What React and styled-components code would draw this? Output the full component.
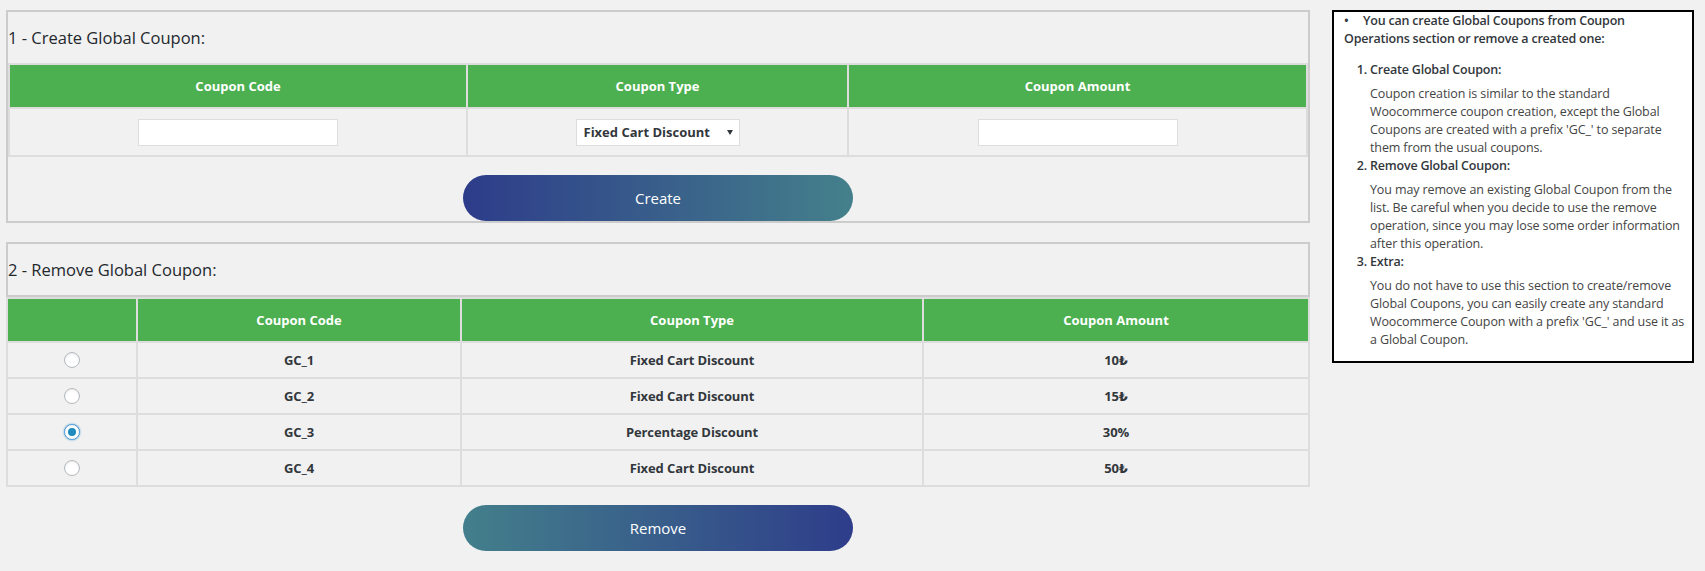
import React from 'react';
import styled, { createGlobalStyle } from 'styled-components';

const GlobalStyle = createGlobalStyle`
  html, body {
    margin: 0;
    padding: 0;
    background: #f1f1f1;
  }

  body {
    font-family: "Open Sans", "DejaVu Sans", sans-serif;
    color: #444;
  }

  * {
    box-sizing: border-box;
  }
`;

const coupons = [
    { code: 'GC_1', type: 'Fixed Cart Discount', amount: '10₺' },
    { code: 'GC_2', type: 'Fixed Cart Discount', amount: '15₺' },
    { code: 'GC_3', type: 'Percentage Discount', amount: '30%', checked: true },
    { code: 'GC_4', type: 'Fixed Cart Discount', amount: '50₺' },
];

const steps = [
    {
        title: 'Create Global Coupon:',
        text: "Coupon creation is similar to the standard Woocommerce coupon creation, except the Global Coupons are created with a prefix 'GC_' to separate them from the usual coupons.",
    },
    {
        title: 'Remove Global Coupon:',
        text: 'You may remove an existing Global Coupon from the list. Be careful when you decide to use the remove operation, since you may lose some order information after this operation.',
    },
    {
        title: 'Extra:',
        text: "You do not have to use this section to create/remove Global Coupons, you can easily create any standard Woocommerce Coupon with a prefix 'GC_' and use it as a Global Coupon.",
    },
];

export default function App() {
    return (
        <>
            <GlobalStyle />
            <Page>
                <Operations>
                    <CreateBox>
                        <SectionTitle>1 - Create Global Coupon:</SectionTitle>
                        <Table>
                            <colgroup>
                                <col style={{ width: 458 }} />
                                <col style={{ width: 381 }} />
                                <col style={{ width: 459 }} />
                            </colgroup>
                            <thead>
                                <tr>
                                    <Th>Coupon Code</Th>
                                    <Th>Coupon Type</Th>
                                    <Th>Coupon Amount</Th>
                                </tr>
                            </thead>
                            <tbody>
                                <tr>
                                    <FieldCell>
                                        <Field><TextInput type="text" /></Field>
                                    </FieldCell>
                                    <FieldCell>
                                        <Field>
                                            <SelectWrap>
                                                <Select defaultValue="fixed_cart">
                                                    <option value="fixed_cart">Fixed Cart Discount</option>
                                                    <option value="percent">Percentage Discount</option>
                                                </Select>
                                                <Arrow />
                                            </SelectWrap>
                                        </Field>
                                    </FieldCell>
                                    <FieldCell>
                                        <Field><TextInput type="text" /></Field>
                                    </FieldCell>
                                </tr>
                            </tbody>
                        </Table>
                        <ActionRow>
                            <GradientButton>Create</GradientButton>
                        </ActionRow>
                    </CreateBox>

                    <TitleBox>
                        <SectionTitle>2 - Remove Global Coupon:</SectionTitle>
                    </TitleBox>
                    <Table>
                        <colgroup>
                            <col style={{ width: 130 }} />
                            <col style={{ width: 324 }} />
                            <col style={{ width: 462 }} />
                            <col style={{ width: 386 }} />
                        </colgroup>
                        <thead>
                            <tr>
                                <Th></Th>
                                <Th>Coupon Code</Th>
                                <Th>Coupon Type</Th>
                                <Th>Coupon Amount</Th>
                            </tr>
                        </thead>
                        <tbody>
                            {coupons.map(c => (
                                <tr key={c.code}>
                                    <Td><Radio type="radio" name="gc" defaultChecked={c.checked} /></Td>
                                    <Td>{c.code}</Td>
                                    <Td>{c.type}</Td>
                                    <Td>{c.amount}</Td>
                                </tr>
                            ))}
                        </tbody>
                    </Table>
                    <ActionRow>
                        <GradientButton $reverse>Remove</GradientButton>
                    </ActionRow>
                </Operations>

                <InfoPanel>
                    <Intro>
                        You can create Global Coupons from Coupon Operations section or remove a created one:
                    </Intro>
                    <Steps>
                        {steps.map(s => (
                            <Step key={s.title}>
                                {s.title}
                                <StepText>{s.text}</StepText>
                            </Step>
                        ))}
                    </Steps>
                </InfoPanel>
            </Page>
        </>
    );
}

const Page = styled.div`
    display: flex;
    align-items: flex-start;
    gap: 22px;
    padding: 10px 0 0 6px;
`

const Operations = styled.div`
    display: flex;
    flex-direction: column;
    width: 1304px;
`

const CreateBox = styled.div`
    border: 2px solid #ccc;
`

const TitleBox = styled.div`
    margin-top: 19px;
    border: 2px solid #ccc;
`

const SectionTitle = styled.div`
    display: flex;
    align-items: center;
    height: 51px;
    font-size: 16.5px;
    color: #23282d;
`

const Table = styled.table`
    width: 100%;
    table-layout: fixed;
    border-collapse: separate;
    border-spacing: 0;
    border-top: 2px solid #ddd;
    border-left: 2px solid #ddd;
`

const Th = styled.th`
    padding: 12px 8px;
    background: #4caf50;
    color: #fff;
    font-size: 13px;
    font-weight: 700;
    line-height: 18px;
    text-align: center;
    border-right: 2px solid #ddd;
    border-bottom: 2px solid #ddd;
`

const Td = styled.td`
    padding: 8px;
    color: #32373c;
    font-size: 13px;
    font-weight: 700;
    line-height: 18px;
    letter-spacing: -0.1px;
    text-align: center;
    border-right: 2px solid #ddd;
    border-bottom: 2px solid #ddd;
`

const FieldCell = styled(Td)`
    padding: 0;
`

const Field = styled.div`
    display: flex;
    align-items: center;
    justify-content: center;
    height: 46px;
`

const TextInput = styled.input`
    width: 200px;
    height: 27px;
    margin: 0;
    padding: 0 8px;
    border: 1px solid #ddd;
    background: #fff;
    font: inherit;
    outline: none;
`

const SelectWrap = styled.div`
    position: relative;
    width: 164px;
    height: 27px;
`

const Select = styled.select`
    appearance: none;
    width: 100%;
    height: 100%;
    margin: 0;
    padding: 0 20px 0 7px;
    border: 1px solid #ddd;
    border-radius: 0;
    background: #fff;
    color: #32373c;
    font-family: inherit;
    font-size: 13px;
    font-weight: 700;
    outline: none;
`

const Arrow = styled.span`
    position: absolute;
    top: 11px;
    right: 7px;
    width: 0;
    height: 0;
    border-left: 3px solid transparent;
    border-right: 3px solid transparent;
    border-top: 5px solid #32373c;
    pointer-events: none;
`

const ActionRow = styled.div`
    display: flex;
    justify-content: center;
    padding-top: 18px;
`

const GradientButton = styled.button`
    width: 390px;
    height: 46px;
    border: none;
    border-radius: 23px;
    background: ${props => props.$reverse
        ? "linear-gradient(to right, #437f8b, #2e3d8a)"
        : "linear-gradient(to right, #2d3c8a, #44808b)"};
    color: #fff;
    font-family: inherit;
    font-size: 15px;
    cursor: pointer;
`

const Radio = styled.input`
    appearance: none;
    display: block;
    width: 16px;
    height: 16px;
    margin: 1px auto;
    border: 1px solid #b4b9be;
    border-radius: 50%;
    background: #fff;
    box-shadow: inset 0 1px 2px rgba(0, 0, 0, 0.1);

    &:checked {
        border-color: #5b9dd9;
        box-shadow: 0 0 2px rgba(30, 140, 190, 0.8);
    }

    &:checked::before {
        content: '';
        display: block;
        width: 8px;
        height: 8px;
        margin: 3px;
        border-radius: 50%;
        background: #1e8cbe;
    }
`

const InfoPanel = styled.div`
    width: 362px;
    padding: 0 2px 12px 10px;
    border: 2px solid #000;
    background: #fff;
    font-size: 12.5px;
    line-height: 18px;
    color: #444;
`

const Intro = styled.p`
    margin: 0 0 13px;
    font-weight: 600;
    letter-spacing: -0.2px;
    color: #32373c;

    &::before {
        content: '•';
        display: inline-block;
        width: 19px;
    }
`

const Steps = styled.ol`
    margin: 0;
    padding-left: 26px;
`

const Step = styled.li`
    font-weight: 600;
    letter-spacing: -0.2px;
    color: #32373c;
`

const StepText = styled.p`
    margin: 6px 0 0;
    font-weight: 400;
    letter-spacing: -0.12px;
    color: #444;
`
